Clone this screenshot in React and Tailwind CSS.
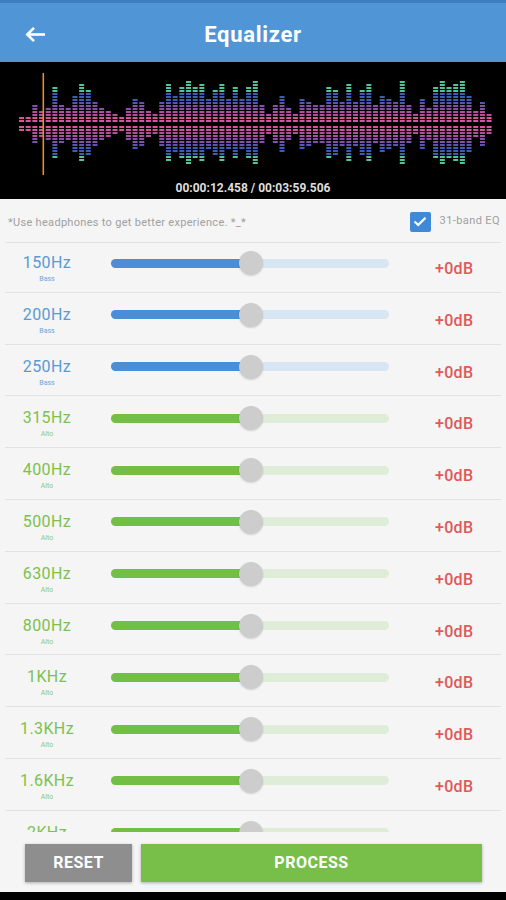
import React from "react";

const TOPS = [175,175,135,155,145,85,135,145,105,75,95,125,145,155,165,175,145,115,125,155,165,125,75,105,85,65,85,75,115,95,75,115,85,115,85,65,135,165,135,105,145,165,115,125,135,135,85,95,125,75,125,95,75,135,105,115,125,65,135,165,115,145,85,65,85,75,65,105,155,125,165];

function segColor(d) {
  if (d < 6) return "#d6559a";
  if (d < 11) return "#b34f9f";
  if (d < 16) return "#8450a8";
  if (d < 21) return "#5a55b0";
  if (d < 30) return "#3b5db3";
  return "#4fc39a";
}

function Waveform() {
  const rects = [];
  const cTop = 60;
  const cBot = 64;
  TOPS.forEach((t, i) => {
    const x = 19 + i * 6.68;
    const h = Math.max(2, (190 - t) / 3);
    const nTop = Math.max(1, Math.round(h / 3));
    const nBot = Math.max(1, Math.round((h * 0.97) / 3));
    for (let s = 0; s < nTop; s++) {
      const d = s * 3;
      rects.push(
        <rect key={`t${i}-${s}`} x={x} y={cTop - d - 2} width={5} height={2} fill={segColor(d)} />
      );
    }
    for (let s = 0; s < nBot; s++) {
      const d = s * 3;
      rects.push(
        <rect key={`b${i}-${s}`} x={x} y={cBot + d} width={5} height={2} fill={segColor(d)} />
      );
    }
  });
  return (
    <svg width="506" height="116" viewBox="0 0 506 116" className="block">
      {rects}
      <rect x="42.5" y="11" width="1.6" height="102" fill="#e0902e" />
    </svg>
  );
}

const ROWS = [
  { f: "150Hz", s: "Bass", c: "blue" },
  { f: "200Hz", s: "Bass", c: "blue" },
  { f: "250Hz", s: "Bass", c: "blue" },
  { f: "315Hz", s: "Alto", c: "green" },
  { f: "400Hz", s: "Alto", c: "green" },
  { f: "500Hz", s: "Alto", c: "green" },
  { f: "630Hz", s: "Alto", c: "green" },
  { f: "800Hz", s: "Alto", c: "green" },
  { f: "1KHz", s: "Alto", c: "green" },
  { f: "1.3KHz", s: "Alto", c: "green" },
  { f: "1.6KHz", s: "Alto", c: "green" },
  { f: "2KHz", s: "Alto", c: "green" },
];

function Row({ f, s, c }) {
  const blue = c === "blue";
  return (
    <div className="h-[51.8px] flex flex-col">
      <div className="flex-1 flex items-start pt-[13px]">
        <div className="w-[94px] flex flex-col items-center">
          <div
            className={`text-[16px] leading-[18px] tracking-[0.4px] ${blue ? "text-[#5b99d4]" : "text-[#7cc14e]"}`}
          >
            {f}
          </div>
          <div
            className={`mt-[2px] text-[7px] leading-[10px] ${blue ? "text-[#6da3d8]" : "text-[#93c672]"}`}
          >
            {s}
          </div>
        </div>
        <div className="ml-[17px] mt-[-3px] w-[278px] h-[24px] relative flex items-center">
          <div className={`w-full h-[9px] rounded-full ${blue ? "bg-[#d8e6f3]" : "bg-[#dfecd7]"}`}>
            <div className={`w-[145px] h-full rounded-full ${blue ? "bg-[#4a8ed7]" : "bg-[#73bf45]"}`} />
          </div>
          <div className="absolute left-[128px] top-0 w-[24px] h-[24px] rounded-full bg-[#cdcdcd] shadow-[0_1px_2px_rgba(0,0,0,0.15)]" />
        </div>
        <div className="ml-[46px] mt-[6px] text-[16px] leading-[18px] font-medium tracking-[0.3px] text-[#e05858]">
          +0dB
        </div>
      </div>
      <div className="mx-[5px] h-px bg-[#e2e2e2]" />
    </div>
  );
}

export default function App() {
  return (
    <div className="w-[506px] h-[900px] bg-[#f5f5f5] flex flex-col overflow-hidden font-['Roboto',sans-serif]">
      <div className="h-[3px] bg-[#3e7ec0]" />
      <header className="h-[59px] bg-[#5096d7] relative flex items-center justify-center pt-[3px]">
        <div className="absolute left-[25px] top-[23px]">
          <svg width="21" height="17" viewBox="0 0 21 17" fill="none">
            <path d="M20 8.5H2.5" stroke="white" strokeWidth="2.6" />
            <path d="M9 1.8L2.3 8.5L9 15.2" stroke="white" strokeWidth="2.6" strokeLinejoin="miter" />
          </svg>
        </div>
        <h1 className="text-white text-[22px] font-bold tracking-[0.7px]">Equalizer</h1>
      </header>
      <div className="h-[137px] bg-black flex flex-col">
        <Waveform />
        <div className="h-[21px] leading-[21px] text-center text-[12px] font-bold text-[#dedede]">
          00:00:12.458 / 00:03:59.506
        </div>
      </div>
      <div className="h-[44px] flex flex-col">
        <div className="flex-1 flex items-center justify-between pl-[8px] pr-[6px] pt-[2px]">
          <span className="mt-[3px] text-[11px] text-[#a0a0a0] tracking-[0.3px]">
            *Use headphones to get better experience. *_*
          </span>
          <div className="flex items-center gap-[9px]">
            <div className="w-[21px] h-[20px] rounded-[2px] bg-[#3f89d7] flex items-center justify-center">
              <svg width="14" height="11" viewBox="0 0 14 11" fill="none">
                <path d="M1.5 5.5L5.2 9L12.5 1.8" stroke="white" strokeWidth="2.2" />
              </svg>
            </div>
            <span className="text-[11px] text-[#a0a0a0] tracking-[0.4px]">31-band EQ</span>
          </div>
        </div>
        <div className="mx-[5px] h-px bg-[#e2e2e2]" />
      </div>
      <div className="h-[589px] overflow-hidden">
        <div className="-mt-[2px]">
          {ROWS.map((r) => (
            <Row key={r.f} {...r} />
          ))}
        </div>
      </div>
      <div className="h-[60px] flex items-start pt-[12px] pl-[25px] gap-[9px]">
        <button className="w-[107px] h-[38px] bg-[#8e8e8e] text-white text-[16px] font-bold tracking-[0.5px] shadow-[0_1px_3px_rgba(0,0,0,0.3)]">
          RESET
        </button>
        <button className="w-[341px] h-[38px] bg-[#77bf48] text-white text-[16px] font-bold tracking-[0.5px] shadow-[0_1px_3px_rgba(0,0,0,0.3)]">
          PROCESS
        </button>
      </div>
      <div className="h-[8px] bg-black" />
    </div>
  );
}
